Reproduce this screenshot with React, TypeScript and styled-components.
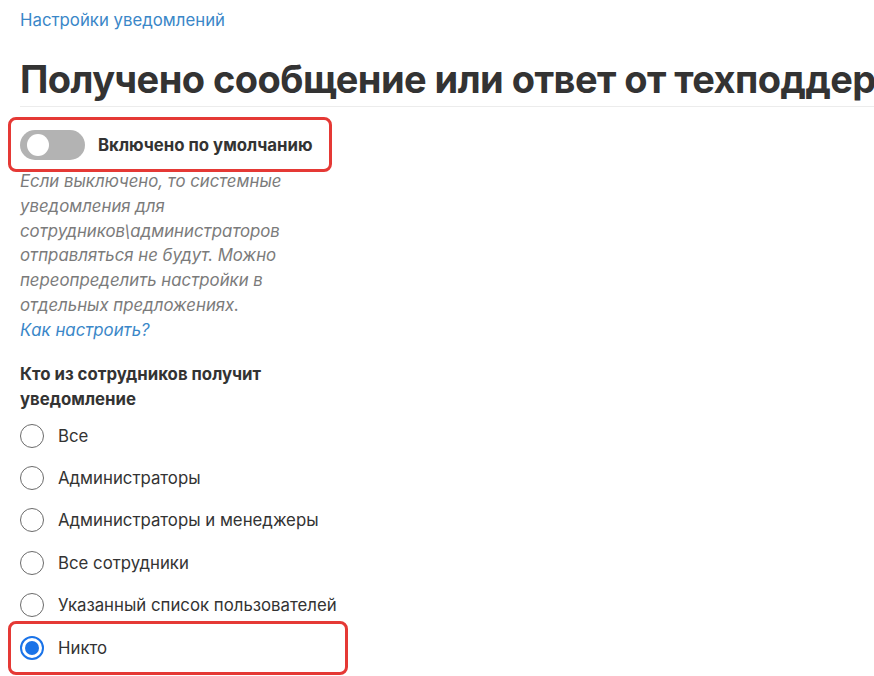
import styled, { createGlobalStyle } from "styled-components";

const GlobalStyle = createGlobalStyle`
  html, body {
    margin: 0;
    padding: 0;
    background: #ffffff;
  }
  body {
    font-family: Inter, "Noto Sans", sans-serif;
    color: #333333;
    overflow: hidden;
  }
`;

const Page = styled.div`
  width: 874px;
  height: 676px;
  padding: 8px 0 0 20px;
  box-sizing: border-box;
  overflow: hidden;
`;

const Breadcrumb = styled.a`
  display: block;
  font-size: 16.8px;
  line-height: 24px;
  color: #3a87c8;
  text-decoration: none;
`;

const Title = styled.h1`
  margin: 24px 0 0 0;
  padding-bottom: 4px;
  font-size: 38px;
  line-height: 46px;
  font-weight: 700;
  letter-spacing: -0.55px;
  color: #333333;
  white-space: nowrap;
  border-bottom: 1px solid #ececec;
`;

const Highlight = styled.div<{ $width: number }>`
  width: ${(p) => p.$width}px;
  margin-left: -12px;
  border: 3px solid #e53935;
  border-radius: 8px;
  box-sizing: border-box;
  padding: 0 9px;
  display: flex;
  align-items: center;
`;

const ToggleRow = styled(Highlight)`
  margin-top: 10px;
  height: 55px;
  gap: 13px;
`;

const Switch = styled.span`
  width: 65px;
  height: 30px;
  border-radius: 15px;
  background: #b3b3b3;
  position: relative;
  flex-shrink: 0;

  &::after {
    content: "";
    position: absolute;
    left: 7px;
    top: 4px;
    width: 22px;
    height: 22px;
    border-radius: 50%;
    background: #ffffff;
  }
`;

const ToggleLabel = styled.span`
  font-size: 16.8px;
  font-weight: 700;
  color: #333333;
`;

const Hint = styled.p`
  margin: -3px 0 0 0;
  width: 290px;
  font-size: 16.8px;
  line-height: 24.8px;
  font-style: italic;
  color: #7b7b7b;
`;

const HintLink = styled.a`
  color: #3a87c8;
  text-decoration: none;
`;

const GroupTitle = styled.div`
  margin-top: 19px;
  width: 290px;
  font-size: 16.8px;
  line-height: 25px;
  font-weight: 700;
  color: #333333;
`;

const RadioList = styled.div`
  margin-top: 3px;
  display: flex;
  flex-direction: column;
`;

const RadioRow = styled.label`
  height: 42.3px;
  display: flex;
  align-items: center;
  gap: 14px;
  font-size: 16.8px;
  color: #333333;
`;

const SelectedRow = styled(Highlight)`
  height: 54px;
  margin-top: -5px;
  gap: 14px;
  font-size: 16.8px;
  color: #333333;
`;

const Radio = styled.span<{ $checked?: boolean }>`
  width: 24px;
  height: 24px;
  border-radius: 50%;
  box-sizing: border-box;
  border: ${(p) => (p.$checked ? "2px solid #1a73e8" : "1.5px solid #6b6b6b")};
  flex-shrink: 0;
  display: flex;
  align-items: center;
  justify-content: center;

  &::after {
    content: "";
    display: ${(p) => (p.$checked ? "block" : "none")};
    width: 14px;
    height: 14px;
    border-radius: 50%;
    background: #1a73e8;
  }
`;

const options = [
  "Все",
  "Администраторы",
  "Администраторы и менеджеры",
  "Все сотрудники",
  "Указанный список пользователей",
];

export default function App() {
  return (
    <>
      <GlobalStyle />
      <Page>
        <Breadcrumb href="#">Настройки уведомлений</Breadcrumb>
        <Title>Получено сообщение или ответ от техподдержки</Title>
        <ToggleRow $width={324}>
          <Switch />
          <ToggleLabel>Включено по умолчанию</ToggleLabel>
        </ToggleRow>
        <Hint>
          Если выключено, то системные уведомления для
          сотрудников\администраторов отправляться не будут. Можно
          переопределить настройки в отдельных предложениях.
          <br />
          <HintLink href="#">Как настроить?</HintLink>
        </Hint>
        <GroupTitle>Кто из сотрудников получит уведомление</GroupTitle>
        <RadioList>
          {options.map((o) => (
            <RadioRow key={o}>
              <Radio />
              {o}
            </RadioRow>
          ))}
          <SelectedRow $width={340}>
            <Radio $checked />
            Никто
          </SelectedRow>
        </RadioList>
      </Page>
    </>
  );
}
